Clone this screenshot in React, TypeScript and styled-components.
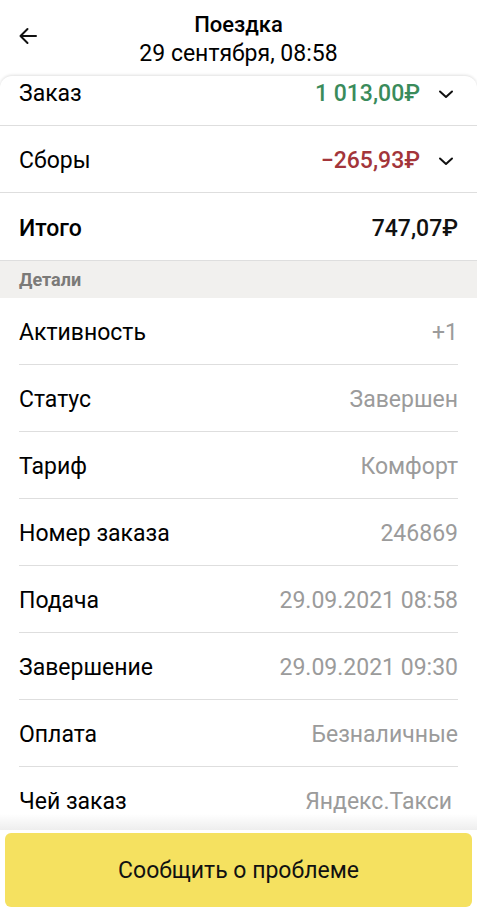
import { useEffect, useRef } from 'react';
import styled, { createGlobalStyle } from 'styled-components';

const GlobalStyle = createGlobalStyle`
  html, body {
    margin: 0;
    padding: 0;
    background: #ffffff;
  }
  body {
    font-family: Roboto, "Noto Sans", Arial, sans-serif;
    color: #000;
  }
`;

const Page = styled.div`
  width: 477px;
  height: 912px;
  display: flex;
  flex-direction: column;
  background: #fff;
  overflow: hidden;
`;

const Header = styled.header`
  height: 76px;
  flex-shrink: 0;
  display: grid;
  grid-template-columns: 56px 1fr 56px;
  align-items: center;
`;

const BackButton = styled.button`
  border: none;
  background: none;
  padding: 0 0 0 18px;
  height: 40px;
  display: flex;
  align-items: center;
  cursor: pointer;
  margin-top: -4px;
`;

const TitleBlock = styled.div`
  display: flex;
  flex-direction: column;
  align-items: center;
  gap: 2px;
  margin-top: 1px;
`;

const Title = styled.div`
  font-size: 22px;
  font-weight: 500;
  line-height: 27px;
`;

const Subtitle = styled.div`
  font-size: 23px;
  line-height: 27px;
`;

const Sheet = styled.div`
  flex: 1;
  min-height: 0;
  border-radius: 12px 12px 0 0;
  box-shadow: 0 -1px 3px rgba(0, 0, 0, 0.12);
  overflow: hidden;
  display: flex;
  flex-direction: column;
`;

const Scroll = styled.div`
  flex: 1;
  overflow: hidden;
`;

const Row = styled.div<{ $inset?: boolean }>`
  height: 67px;
  display: flex;
  align-items: center;
  justify-content: space-between;
  padding: 2px 19px 0;
  box-sizing: border-box;
  position: relative;
  &::after {
    content: '';
    position: absolute;
    bottom: 0;
    left: ${(p) => (p.$inset ? '19px' : '0')};
    right: ${(p) => (p.$inset ? '19px' : '0')};
    height: 1px;
    background: #dedede;
  }
`;

const Label = styled.span<{ $bold?: boolean }>`
  font-size: 23px;
  font-weight: ${(p) => (p.$bold ? 500 : 400)};
`;

const Amount = styled.span<{ $tone?: 'green' | 'red' | 'black' }>`
  font-size: 23px;
  font-weight: 500;
  color: ${(p) => (p.$tone === 'green' ? '#3a8b5b' : p.$tone === 'red' ? '#a3353a' : '#111')};
`;

const AmountGroup = styled.div`
  display: flex;
  align-items: center;
  gap: 18px;
  margin-right: 4px;
`;

const Value = styled.span<{ $shift?: number }>`
  font-size: 23px;
  color: #9b9b9b;
  margin-right: ${(p) => p.$shift ?? 0}px;
`;

const SectionHead = styled.div`
  height: 37px;
  background: #f1f0ee;
  display: flex;
  align-items: center;
  padding: 0 19px;
  font-size: 18px;
  font-weight: 700;
  color: #7b7a78;
`;

const Footer = styled.div`
  flex-shrink: 0;
  padding: 3px 5px 5px;
  background: #fff;
  position: relative;
  &::before {
    content: '';
    position: absolute;
    left: 0;
    right: 0;
    top: -16px;
    height: 16px;
    background: linear-gradient(to bottom, rgba(255, 255, 255, 0), rgba(236, 236, 236, 0.9));
  }
`;

const ReportButton = styled.button`
  width: 100%;
  height: 74px;
  border: none;
  border-radius: 6px;
  background: #f5e160;
  font-family: Roboto, "Noto Sans", Arial, sans-serif;
  font-size: 23px;
  color: #111;
  cursor: pointer;
`;

const Chevron = () => (
  <svg width="16" height="16" viewBox="0 0 16 16" fill="none">
    <path d="M2 5.5l6 5.5 6-5.5" stroke="#111" strokeWidth="2" strokeLinecap="round" strokeLinejoin="round" />
  </svg>
);

const ArrowLeft = () => (
  <svg width="20" height="20" viewBox="0 0 20 20" fill="none">
    <path d="M18 10H2.5M9.5 3l-7 7 7 7" stroke="#111" strokeWidth="2" strokeLinecap="round" strokeLinejoin="round" />
  </svg>
);

const details: { label: string; value: string; shift?: number }[] = [
  { label: 'Активность', value: '+1' },
  { label: 'Статус', value: 'Завершен' },
  { label: 'Тариф', value: 'Комфорт' },
  { label: 'Номер заказа', value: '246869' },
  { label: 'Подача', value: '29.09.2021 08:58' },
  { label: 'Завершение', value: '29.09.2021 09:30' },
  { label: 'Оплата', value: 'Безналичные' },
  { label: 'Чей заказ', value: 'Яндекс.Такси', shift: 6 },
];

export default function App() {
  const scrollRef = useRef<HTMLDivElement>(null);

  useEffect(() => {
    if (scrollRef.current) scrollRef.current.scrollTop = 17;
  }, []);

  return (
    <Page>
      <GlobalStyle />
      <Header>
        <BackButton aria-label="Назад">
          <ArrowLeft />
        </BackButton>
        <TitleBlock>
          <Title>Поездка</Title>
          <Subtitle>29 сентября, 08:58</Subtitle>
        </TitleBlock>
        <div />
      </Header>
      <Sheet>
        <Scroll ref={scrollRef}>
          <Row>
            <Label>Заказ</Label>
            <AmountGroup>
              <Amount $tone="green">1 013,00₽</Amount>
              <Chevron />
            </AmountGroup>
          </Row>
          <Row>
            <Label>Сборы</Label>
            <AmountGroup>
              <Amount $tone="red">−265,93₽</Amount>
              <Chevron />
            </AmountGroup>
          </Row>
          <Row style={{ height: 68 }}>
            <Label $bold>Итого</Label>
            <Amount $tone="black">747,07₽</Amount>
          </Row>
          <SectionHead>Детали</SectionHead>
          {details.map((d) => (
            <Row key={d.label} $inset>
              <Label>{d.label}</Label>
              <Value $shift={d.shift}>{d.value}</Value>
            </Row>
          ))}
        </Scroll>
        <Footer>
          <ReportButton>Сообщить о проблеме</ReportButton>
        </Footer>
      </Sheet>
    </Page>
  );
}
